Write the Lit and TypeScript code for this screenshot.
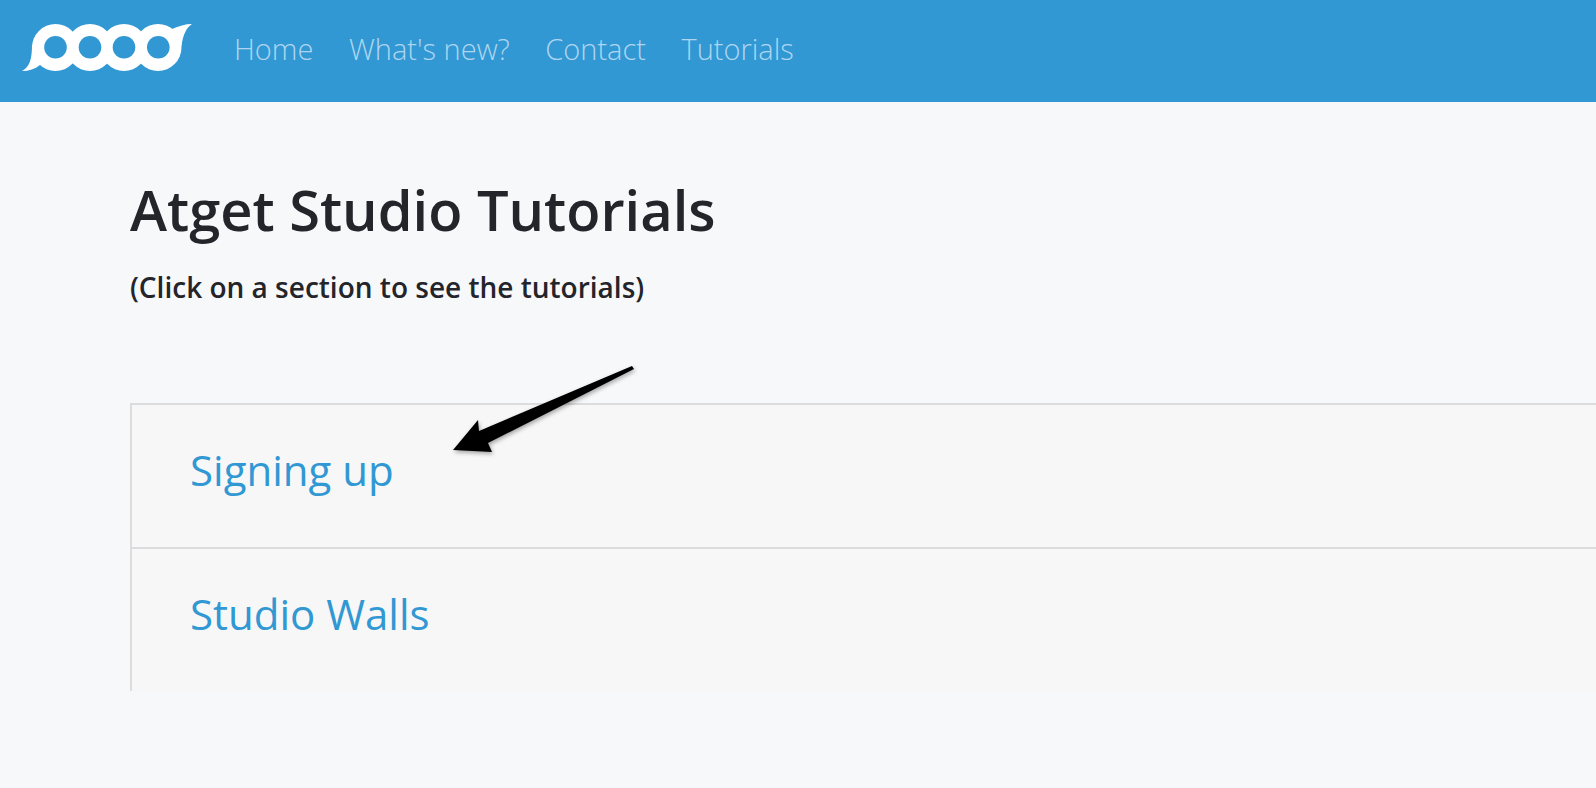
import { LitElement, html, css, svg } from "lit";
import { customElement } from "lit/decorators.js";

const logo = svg`<svg class="logo" width="170" height="48" viewBox="22 24 170 48">
  <g fill="#fff">
    <circle cx="55.5" cy="47.5" r="23.5"/>
    <circle cx="90" cy="47.5" r="23.5"/>
    <circle cx="124" cy="47.5" r="23.5"/>
    <circle cx="158" cy="47.5" r="23.5"/>
    <path d="M32 45 C32 58 30 67 22 71 C29 71 35 69 40 65 L55 47 Z"/>
    <path d="M172 29 C179 26 185 24 192 24 C186 28 183 35 181.5 46 L158 47 Z"/>
  </g>
  <circle cx="55.5" cy="47.3" r="11.3" fill="#3198d3"/>
  <circle cx="90" cy="47.3" r="11.3" fill="#3198d3"/>
  <circle cx="124" cy="47.3" r="11.3" fill="#3198d3"/>
  <circle cx="158.3" cy="47.3" r="11.3" fill="#3198d3"/>
</svg>`;

@customElement("app-root")
export class AppRoot extends LitElement {
  static styles = css`
    :host { display: block; height: 788px; overflow: hidden; position: relative; background: #f7f8fa; font-family: "Open Sans", sans-serif; color: #24252b; }
    .bar { height: 102px; background: #3198d3; display: flex; align-items: center; padding-left: 22px; box-sizing: border-box; }
    .logo { display: block; margin-top: -7px; margin-right: 42px; }
    nav { display: flex; gap: 35.5px; margin-top: -6px; }
    nav a { font-size: 29px; font-weight: 300; color: #aed5f0; }
    main { padding: 69px 0 0 130px; }
    h1 { margin: 0; font-size: 56px; line-height: 76px; font-weight: 600; }
    .hint { margin: 21px 0 0; font-size: 28px; line-height: 38px; font-weight: 600; }
    .panel { margin-top: 97px; height: 286px; background: #f7f7f8; border-left: 2px solid #dcdcdf; border-top: 2px solid #dcdcdf; }
    .row { height: 142px; box-sizing: border-box; display: flex; align-items: center; padding: 0 0 13px 58px; font-size: 42px; color: #3198d3; }
    .row + .row { border-top: 2px solid #dcdcdf; height: 144px; }
    .arrow { position: absolute; left: 440px; top: 355px; filter: drop-shadow(1px 2px 2px rgba(0,0,0,.35)); }
  `;
  render() {
    return html`
      <header class="bar">
        ${logo}
        <nav><a>Home</a><a>What's new?</a><a>Contact</a><a>Tutorials</a></nav>
      </header>
      <main>
        <h1>Atget Studio Tutorials</h1>
        <p class="hint">(Click on a section to see the tutorials)</p>
        <section class="panel">
          <div class="row">Signing up</div>
          <div class="row">Studio Walls</div>
        </section>
      </main>
      <svg class="arrow" width="210" height="110" viewBox="440 355 210 110">
        <path d="M453 450 L478 420 L479 431 L632 366 L634 369 L488 443 L492 452 Z" fill="#000"/>
      </svg>
    `;
  }
}
